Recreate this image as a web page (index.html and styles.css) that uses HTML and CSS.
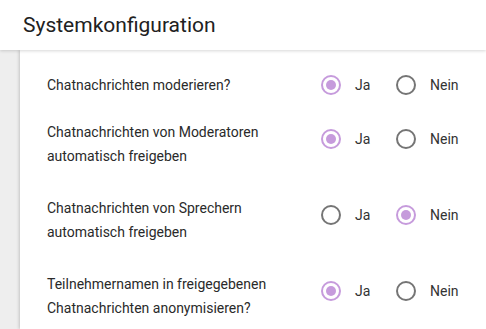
FILE: index.html
```html
<!DOCTYPE html>
<html lang="de">
<head>
<meta charset="utf-8">
<title>Systemkonfiguration</title>
<link rel="stylesheet" href="styles.css">
</head>
<body>
<header class="topbar">
  <h1 class="title">Systemkonfiguration</h1>
</header>
<main class="main">
  <section class="panel">
    <div class="row row--compact">
      <div class="question">Chatnachrichten moderieren?</div>
      <div class="options">
        <span class="option"><span class="radio radio--on"></span><span class="opt-label">Ja</span></span>
        <span class="option"><span class="radio"></span><span class="opt-label">Nein</span></span>
      </div>
    </div>
    <div class="row">
      <div class="question">Chatnachrichten von Moderatoren<br>automatisch freigeben</div>
      <div class="options">
        <span class="option"><span class="radio radio--on"></span><span class="opt-label">Ja</span></span>
        <span class="option"><span class="radio"></span><span class="opt-label">Nein</span></span>
      </div>
    </div>
    <div class="row">
      <div class="question">Chatnachrichten von Sprechern<br>automatisch freigeben</div>
      <div class="options">
        <span class="option"><span class="radio"></span><span class="opt-label">Ja</span></span>
        <span class="option"><span class="radio radio--on"></span><span class="opt-label">Nein</span></span>
      </div>
    </div>
    <div class="row">
      <div class="question">Teilnehmernamen in freigegebenen<br>Chatnachrichten anonymisieren?</div>
      <div class="options">
        <span class="option"><span class="radio radio--on"></span><span class="opt-label">Ja</span></span>
        <span class="option"><span class="radio"></span><span class="opt-label">Nein</span></span>
      </div>
    </div>
  </section>
</main>
</body>
</html>
```
FILE: styles.css
```css
html, body {
  margin: 0;
  padding: 0;
  height: 100%;
}
body {
  background: #eeeeee;
  font-family: Roboto, "Liberation Sans", Arial, sans-serif;
  color: #212121;
  overflow: hidden;
}
.topbar {
  position: relative;
  z-index: 2;
  height: 50px;
  background: #ffffff;
  box-shadow: 0 1px 3px rgba(0, 0, 0, 0.16);
  display: flex;
  align-items: center;
  padding-left: 23px;
}
.title {
  margin: 0;
  font-size: 21px;
  font-weight: 400;
  color: #212121;
  letter-spacing: 0;
}
.main {
  padding-left: 20px;
  height: calc(100% - 50px);
}
.panel {
  position: relative;
  z-index: 1;
  background: #ffffff;
  height: 100%;
  box-shadow: -1px 0 3px rgba(0, 0, 0, 0.18);
  padding: 16px 0 0 27px;
  box-sizing: border-box;
}
.row {
  display: flex;
  align-items: flex-start;
  margin-bottom: 28px;
}
.row--compact {
  margin-bottom: 17px;
  align-items: center;
}
.question {
  width: 274px;
  font-size: 14px;
  line-height: 24px;
  color: #2a2a2a;
}
.row--compact .question {
  align-self: center;
}
.options {
  display: flex;
  align-items: center;
  height: 37px;
}
.option {
  display: flex;
  align-items: center;
  width: 75px;
}
.radio {
  width: 20px;
  height: 20px;
  border: 2px solid #757575;
  border-radius: 50%;
  box-sizing: border-box;
  display: flex;
  align-items: center;
  justify-content: center;
  margin-right: 14px;
}
.radio--on {
  border-color: #c69bdc;
}
.radio--on::after {
  content: "";
  width: 10px;
  height: 10px;
  border-radius: 50%;
  background: #c69bdc;
}
.opt-label {
  font-size: 14px;
  color: #333333;
}
```
